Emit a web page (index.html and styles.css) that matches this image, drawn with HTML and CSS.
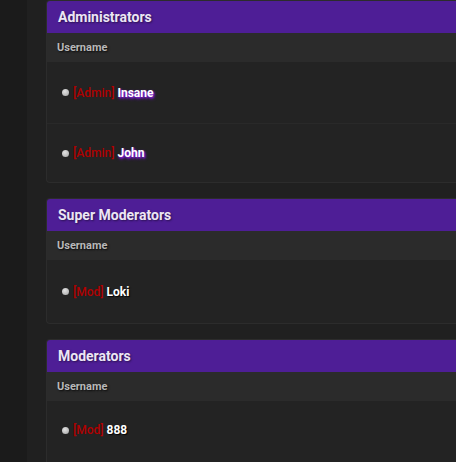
FILE: index.html
```html
<!DOCTYPE html>
<html>
<head>
<meta charset="utf-8">
<link rel="stylesheet" href="styles.css">
</head>
<body>
<div class="sidebar"></div>
<main class="main">
  <section class="card">
    <div class="card-head">Administrators</div>
    <div class="col-head">Username</div>
    <div class="row row-a"><span class="dot"></span><span class="rank">[Admin]</span> <span class="name glow">Insane</span></div>
    <div class="row row-b last"><span class="dot"></span><span class="rank">[Admin]</span> <span class="name glow">John</span></div>
  </section>
  <section class="card">
    <div class="card-head">Super Moderators</div>
    <div class="col-head">Username</div>
    <div class="row row-c last"><span class="dot"></span><span class="rank">[Mod]</span> <span class="name plain">Loki</span></div>
  </section>
  <section class="card">
    <div class="card-head">Moderators</div>
    <div class="col-head">Username</div>
    <div class="row row-d last"><span class="dot"></span><span class="rank">[Mod]</span> <span class="name plain">888</span></div>
  </section>
</main>
</body>
</html>
```
FILE: styles.css
```css
html, body {
  margin: 0;
  padding: 0;
}
body {
  background: #202020;
  width: 456px;
  height: 462px;
  overflow: hidden;
  display: flex;
  font-family: Roboto, "Liberation Sans", sans-serif;
}
.sidebar {
  width: 27px;
  flex: none;
  background: #1b1b1b;
}
.main {
  flex: 1;
  min-width: 0;
  padding-left: 19px;
  display: flex;
  flex-direction: column;
}
.card {
  flex: none;
  background: #232323;
  border: 1px solid #2c2c2c;
  border-right: none;
  border-radius: 4px 0 0 4px;
  overflow: hidden;
  margin-bottom: 15px;
}
.card-head {
  height: 32px;
  line-height: 32px;
  background: #4e1e96;
  color: #ece6f4;
  font-weight: 700;
  font-size: 14px;
  padding-left: 11px;
  text-shadow: 1px 1px 2px rgba(0,0,0,0.45);
}
.col-head {
  height: 29px;
  line-height: 30px;
  background: #2b2b2b;
  color: #b8b8b8;
  font-weight: 700;
  font-size: 11px;
  padding-left: 10px;
  text-shadow: 1px 1px 2px rgba(0,0,0,0.8);
}
.row {
  display: flex;
  align-items: center;
  padding-left: 15px;
  font-size: 12px;
  border-bottom: 1px solid #292929;
}
.row.last {
  border-bottom: none;
}
.row-a { height: 61px; }
.row-b { height: 58px; }
.row-c { height: 63px; }
.row-d { height: 58px; padding-bottom: 6px; }
.dot {
  width: 7px;
  height: 7px;
  border-radius: 50%;
  background: radial-gradient(circle at 40% 35%, #e2e2e2, #a4a4a4);
  margin-right: 4px;
}
.rank {
  color: #b00000;
  font-weight: 500;
  white-space: pre;
}
.name {
  margin-left: 3px;
  color: #ffffff;
  font-weight: 700;
}
.glow {
  text-shadow: 1px 1px 2px #8a22e0, 1px 2px 3px #6a10c0;
}
.plain {
  text-shadow: 1px 1px 1px rgba(0,0,0,0.9);
}
```
